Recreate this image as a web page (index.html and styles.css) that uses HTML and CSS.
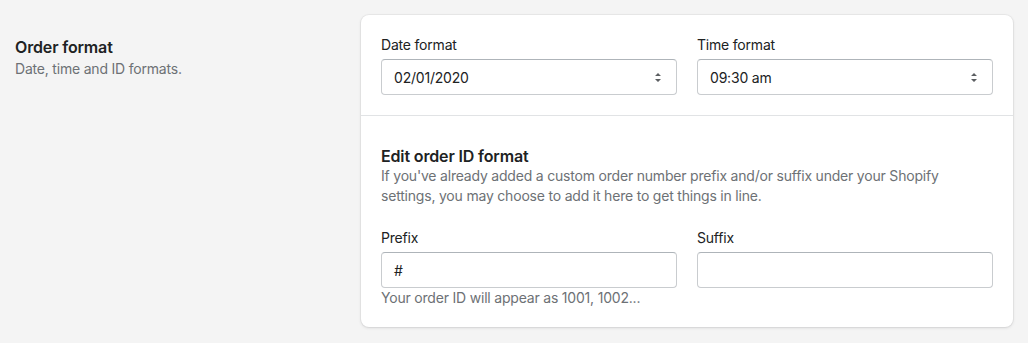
FILE: index.html
```html
<!DOCTYPE html>
<html lang="en">
<head>
    <meta charset="UTF-8">
    <title>Order format</title>
    <link rel="stylesheet" href="styles.css">
</head>
<body>
    <div class="layout">
        <!-- Описание секции -->
        <div class="annotation">
            <h2 class="annotation-title">Order format</h2>
            <p class="annotation-text">Date, time and ID formats.</p>
        </div>

        <!-- Карточка с настройками -->
        <div class="card">
            <div class="card-section">
                <div class="field-row">
                    <div class="field">
                        <label class="label">Date format</label>
                        <div class="select">
                            <span>02/01/2020</span>
                            <svg class="select-arrows" viewBox="0 0 20 20" width="20" height="20"><path d="M10 6l-3 3h6zM10 15l3-3H7z" fill="#5c5f62"/></svg>
                        </div>
                    </div>
                    <div class="field">
                        <label class="label">Time format</label>
                        <div class="select">
                            <span>09:30 am</span>
                            <svg class="select-arrows" viewBox="0 0 20 20" width="20" height="20"><path d="M10 6l-3 3h6zM10 15l3-3H7z" fill="#5c5f62"/></svg>
                        </div>
                    </div>
                </div>
            </div>

            <div class="card-section">
                <h3 class="section-title">Edit order ID format</h3>
                <p class="section-text">If you've already added a custom order number prefix and/or suffix under your Shopify settings, you may choose to add it here to get things in line.</p>
                <div class="field-row">
                    <div class="field">
                        <label class="label">Prefix</label>
                        <div class="input">#</div>
                        <p class="help">Your order ID will appear as 1001, 1002...</p>
                    </div>
                    <div class="field">
                        <label class="label">Suffix</label>
                        <div class="input"></div>
                    </div>
                </div>
            </div>
        </div>
    </div>
</body>
</html>
```

FILE: styles.css
```css
/* Общие стили страницы */
body {
    margin: 0;
    background-color: #f4f4f4;
    font-family: Inter, "Liberation Sans", sans-serif;
    color: #202223;
    letter-spacing: -0.2px;
}

.layout {
    display: flex;
    align-items: flex-start;
    padding: 15px;
}

.annotation {
    width: 346px;
    padding-top: 20px;
}

.annotation-title {
    margin: 0;
    font-size: 16px;
    font-weight: 600;
    line-height: 24px;
    letter-spacing: -0.15px;
}

.annotation-text {
    margin: 0;
    font-size: 14px;
    line-height: 20px;
    color: #6d7175;
}

/* Карточка */
.card {
    flex: 1;
    background: #fff;
    border-radius: 8px;
    box-shadow: 0 0 0 1px rgba(63, 63, 68, 0.05), 0 1px 3px rgba(63, 63, 68, 0.15);
}

.card-section {
    padding: 20px;
}

.card-section + .card-section {
    border-top: 1px solid #e1e3e5;
    padding-top: 30px;
    padding-bottom: 19px;
}

.field-row {
    display: grid;
    grid-template-columns: 1fr 1fr;
    gap: 20px;
}

.label {
    display: block;
    font-size: 14px;
    line-height: 20px;
    margin-bottom: 4px;
}

.select,
.input {
    display: flex;
    align-items: center;
    justify-content: space-between;
    height: 36px;
    box-sizing: border-box;
    padding: 0 8px 0 12px;
    border: 1px solid #c9cccf;
    border-top-color: #aeb4b9;
    border-radius: 4px;
    font-size: 14px;
}

.select-arrows {
    display: block;
}

.section-title {
    margin: 0;
    font-size: 16px;
    font-weight: 600;
    line-height: 20px;
    letter-spacing: -0.15px;
}

.section-text {
    margin: 0 0 22px;
    font-size: 14px;
    line-height: 20px;
    color: #6d7175;
}

.help {
    margin: 0;
    font-size: 14px;
    line-height: 20px;
    color: #6d7175;
}
```
